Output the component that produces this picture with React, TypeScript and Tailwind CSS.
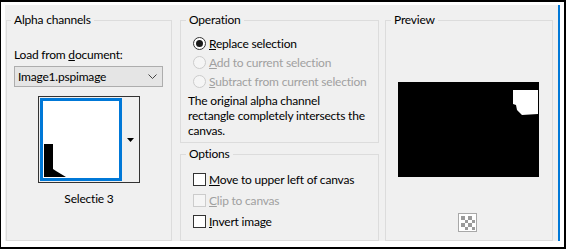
import React from "react";

const Radio = ({ checked, disabled }: { checked?: boolean; disabled?: boolean }) => (
  <span
    className={
      "flex h-[13px] w-[13px] items-center justify-center rounded-full border " +
      (disabled ? "border-[#cccccc] bg-[#f5f5f5]" : "border-[#333333] bg-white")
    }
  >
    {checked && <span className="h-[7px] w-[7px] rounded-full bg-[#1a1a1a]" />}
  </span>
);

const Check = ({ disabled }: { disabled?: boolean }) => (
  <span
    className={
      "block h-[13px] w-[13px] border " +
      (disabled ? "border-[#cccccc] bg-[#f5f5f5]" : "border-[#333333] bg-white")
    }
  />
);

const Checker = () => (
  <div className="flex h-[19px] w-[19px] items-center justify-center border border-[#a8a8a8] bg-white">
    <svg width="14" height="14" viewBox="0 0 4 4" shapeRendering="crispEdges">
      {[0, 1, 2, 3].map((r) =>
        [0, 1, 2, 3].map((c) =>
          (r + c) % 2 === 0 ? (
            <rect key={`${r}-${c}`} x={c} y={r} width="1" height="1" fill="#9a9a9a" />
          ) : null
        )
      )}
    </svg>
  </div>
);

export default function App() {
  return (
    <div className="h-[249px] w-[566px] bg-black pb-[2px] pl-[1px] pr-[2px] pt-[2px] font-[Lato,sans-serif] text-[12px] tracking-[-0.2px] text-black">
      <div className="h-full bg-white pb-[6px] pl-[4px] pr-[4px] pt-[3px]">
        <div className="flex h-full border-r-2 border-[#0078d7] bg-[#f0f0f0] pl-[1px] pt-[7px]">
          {/* Alpha channels */}
          <fieldset className="h-[229px] w-[166px] border border-[#dcdcdc] pl-[7px] pr-[7px]">
            <legend className="ml-[-3px] px-[3px] leading-4">Alpha channels</legend>
            <div className="mt-[19px] leading-4">
              Load from <u>d</u>ocument:
            </div>
            <div className="mt-[3px] flex h-[21px] w-[149px] items-center justify-between border border-[#adadad] bg-[#e5e5e5] pl-[3px] pr-[5px]">
              <span>Image1.pspimage</span>
              <svg width="9" height="5" viewBox="0 0 9 5">
                <polyline points="0.5,0.5 4.5,4.5 8.5,0.5" fill="none" stroke="#444" strokeWidth="1" />
              </svg>
            </div>
            <div className="mx-auto mt-[9px] flex h-[87px] w-[102px] border border-[#333333] bg-[#f0f0f0] p-[1px]">
              <div className="relative h-full w-[82px] border-[3px] border-[#0078d7] bg-white">
                <svg className="absolute bottom-[1px] left-[1px]" width="24" height="33" viewBox="0 0 24 33">
                  <polygon points="0,0 9,0 9,25 12,27 22,33 0,33" fill="#000" />
                </svg>
              </div>
              <div className="flex flex-1 items-center justify-center">
                <svg width="7" height="4" viewBox="0 0 7 4">
                  <polygon points="0,0 7,0 3.5,4" fill="#000" />
                </svg>
              </div>
            </div>
            <div className="mt-[8px] text-center leading-4">Selectie 3</div>
          </fieldset>

          {/* Operation / Options */}
          <div className="ml-[8px] flex w-[199px] flex-col">
            <fieldset className="h-[131px] border border-[#dcdcdc] pl-[7px] pr-[4px]">
              <legend className="ml-[-2px] px-[3px] leading-4">Operation</legend>
              <div className="mt-[6px] flex flex-col pl-[5px]">
                <div className="flex h-[19px] items-center gap-[3px]">
                  <Radio checked />
                  <span>
                    <u>R</u>eplace selection
                  </span>
                </div>
                <div className="flex h-[19px] items-center gap-[3px] text-[#a0a0a0]">
                  <Radio disabled />
                  <span>
                    <u>A</u>dd to current selection
                  </span>
                </div>
                <div className="flex h-[19px] items-center gap-[3px] text-[#a0a0a0]">
                  <Radio disabled />
                  <span>
                    <u>S</u>ubtract from current selection
                  </span>
                </div>
              </div>
              <p className="mt-[2px] leading-[15px]">
                The original alpha channel
                <br />
                rectangle completely intersects the
                <br />
                canvas.
              </p>
            </fieldset>
            <fieldset className="mt-[3px] h-[95px] border border-[#dcdcdc] pl-[7px]">
              <legend className="ml-[-2px] px-[3px] leading-4">Options</legend>
              <div className="mt-[7px] flex flex-col pl-[5px]">
                <div className="flex h-[21px] items-center gap-[3px]">
                  <Check />
                  <span>
                    <u>M</u>ove to upper left of canvas
                  </span>
                </div>
                <div className="flex h-[21px] items-center gap-[3px] text-[#a0a0a0]">
                  <Check disabled />
                  <span>
                    <u>C</u>lip to canvas
                  </span>
                </div>
                <div className="flex h-[21px] items-center gap-[3px]">
                  <Check />
                  <span>
                    <u>I</u>nvert image
                  </span>
                </div>
              </div>
            </fieldset>
          </div>

          {/* Preview */}
          <fieldset className="ml-[6px] h-[229px] w-[168px] border border-[#dcdcdc] pl-[7px]">
            <legend className="ml-[-2px] px-[3px] leading-4">Preview</legend>
            <div className="ml-[5px] mt-[54px] h-[95px] w-[141px] bg-black pl-[115px] pt-[8px]">
              <svg width="25" height="25" viewBox="0 0 25 25">
                <polygon points="0,0 25,0 25,24 9,25 4,20 3,15 0,14" fill="#fff" />
              </svg>
            </div>
            <div className="ml-[65px] mt-[36px]">
              <Checker />
            </div>
          </fieldset>
        </div>
      </div>
    </div>
  );
}
